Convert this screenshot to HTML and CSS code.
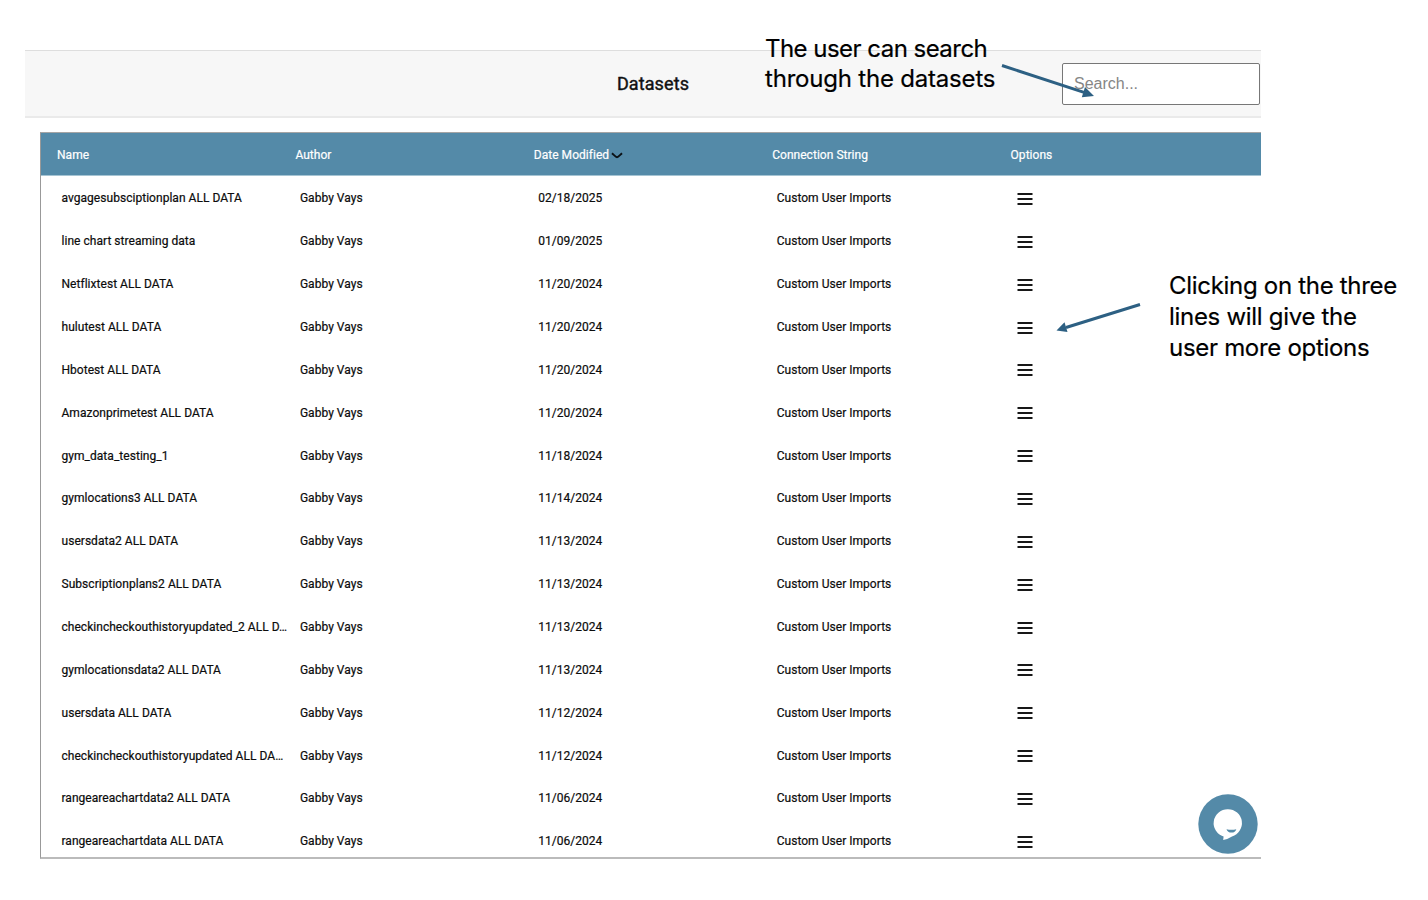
FILE: index.html
```html
<!DOCTYPE html>
<html lang="en">
<head>
<meta charset="utf-8">
<title>Datasets</title>
<link rel="stylesheet" href="styles.css">
</head>
<body>
<svg class="defs" aria-hidden="true"><symbol id="menu" viewBox="0 0 16 14"><path d="M.5 2h15M.5 7h15M.5 12h15" stroke="#181818" stroke-width="1.8" fill="none"/></symbol></svg>
<main class="page">
<header class="topbar">
<h1 class="title">Datasets</h1>
<input class="search" type="text" placeholder="Search..." aria-label="Search">
</header>
<section class="table">
<div class="row head"><span>Name</span><span>Author</span><span>Date Modified<svg class="chevron" viewBox="0 0 12 7"><path d="M1 1.200C3.500 3.500 4.800 5.200 6 5.200S8.500 3.500 11 1.200" fill="none" stroke="#0b1116" stroke-width="1.9"/></svg></span><span>Connection String</span><span>Options</span></div>
<div class="rows">
<div class="row"><span>avgagesubsciptionplan ALL DATA</span><span>Gabby Vays</span><span class="date">02/18/2025</span><span>Custom User Imports</span><svg class="menu"><use href="#menu"/></svg></div>
<div class="row"><span>line chart streaming data</span><span>Gabby Vays</span><span class="date">01/09/2025</span><span>Custom User Imports</span><svg class="menu"><use href="#menu"/></svg></div>
<div class="row"><span>Netflixtest ALL DATA</span><span>Gabby Vays</span><span class="date">11/20/2024</span><span>Custom User Imports</span><svg class="menu"><use href="#menu"/></svg></div>
<div class="row"><span>hulutest ALL DATA</span><span>Gabby Vays</span><span class="date">11/20/2024</span><span>Custom User Imports</span><svg class="menu"><use href="#menu"/></svg></div>
<div class="row"><span>Hbotest ALL DATA</span><span>Gabby Vays</span><span class="date">11/20/2024</span><span>Custom User Imports</span><svg class="menu"><use href="#menu"/></svg></div>
<div class="row"><span>Amazonprimetest ALL DATA</span><span>Gabby Vays</span><span class="date">11/20/2024</span><span>Custom User Imports</span><svg class="menu"><use href="#menu"/></svg></div>
<div class="row"><span>gym_data_testing_1</span><span>Gabby Vays</span><span class="date">11/18/2024</span><span>Custom User Imports</span><svg class="menu"><use href="#menu"/></svg></div>
<div class="row"><span>gymlocations3 ALL DATA</span><span>Gabby Vays</span><span class="date">11/14/2024</span><span>Custom User Imports</span><svg class="menu"><use href="#menu"/></svg></div>
<div class="row"><span>usersdata2 ALL DATA</span><span>Gabby Vays</span><span class="date">11/13/2024</span><span>Custom User Imports</span><svg class="menu"><use href="#menu"/></svg></div>
<div class="row"><span>Subscriptionplans2 ALL DATA</span><span>Gabby Vays</span><span class="date">11/13/2024</span><span>Custom User Imports</span><svg class="menu"><use href="#menu"/></svg></div>
<div class="row"><span>checkincheckouthistoryupdated_2 ALL D…</span><span>Gabby Vays</span><span class="date">11/13/2024</span><span>Custom User Imports</span><svg class="menu"><use href="#menu"/></svg></div>
<div class="row"><span>gymlocationsdata2 ALL DATA</span><span>Gabby Vays</span><span class="date">11/13/2024</span><span>Custom User Imports</span><svg class="menu"><use href="#menu"/></svg></div>
<div class="row"><span>usersdata ALL DATA</span><span>Gabby Vays</span><span class="date">11/12/2024</span><span>Custom User Imports</span><svg class="menu"><use href="#menu"/></svg></div>
<div class="row"><span>checkincheckouthistoryupdated ALL DA…</span><span>Gabby Vays</span><span class="date">11/12/2024</span><span>Custom User Imports</span><svg class="menu"><use href="#menu"/></svg></div>
<div class="row"><span>rangeareachartdata2 ALL DATA</span><span>Gabby Vays</span><span class="date">11/06/2024</span><span>Custom User Imports</span><svg class="menu"><use href="#menu"/></svg></div>
<div class="row"><span>rangeareachartdata ALL DATA</span><span>Gabby Vays</span><span class="date">11/06/2024</span><span>Custom User Imports</span><svg class="menu"><use href="#menu"/></svg></div>
</div>
</section>
</main>
<svg class="chat" viewBox="0 0 60 60"><circle cx="30" cy="30" r="29.7" fill="#548aa8"/><path d="M30 15.200a14 13.900 0 0 1 4 27.200Q29.500 45.200 25.200 46L25.600 42.400A14 13.900 0 0 1 30 15.200Z" fill="#fff"/><path d="M28.500 35.200q5 1 9.800 0-1 3.400-4.800 3.400t-5-3.400Z" fill="#548aa8"/></svg>
<p class="note note-search"><span class="tight">The user can search</span><br><span>through the datasets</span></p>
<p class="note note-menu"><span>Clicking on the three</span><br><span>lines will give the</span><br><span>user more options</span></p>
<svg class="arrows" viewBox="0 0 1428 900"><g stroke="#2d6083" stroke-width="3"><path d="M1002 65.500 1084 92.400M1140 304.500 1066 327.500"/></g><path d="M1094 96 1081.800 97.300 1085 87ZM1056.500 330.500 1064.500 322.200 1067.500 332Z" fill="#2d6083"/></svg>
</body>
</html>
```
FILE: styles.css
```css
* { box-sizing: border-box; }
body { margin: 0; height: 900px; position: relative; overflow: hidden; background: #fff; color: #0c0c0c; font-family: Roboto, sans-serif; }
.defs { position: absolute; width: 0; height: 0; }
.page { width: 1261px; padding: 50px 0 0 25px; }
.topbar { height: 68px; display: grid; grid-template-columns: 1fr auto 1fr; align-items: center; padding: 0 1px 0 21px; background: #f7f7f7; border-top: 1px solid #dedede; border-bottom: 2px solid #eaeaea; }
.title { grid-column: 2; margin: 0; font-size: 18px; font-weight: 400; -webkit-text-stroke: 0.4px #111; letter-spacing: 0.1px; line-height: 22px; color: #111; }
.search { justify-self: end; width: 198px; height: 42px; padding: 0 11px; border: 1px solid #777; border-radius: 2px; background: #fff; font: 16px "Liberation Sans", sans-serif; }
.search::placeholder { color: #868686; opacity: 1; }
.table { margin: 14px 0 0 15px; height: 727px; border: 1px solid #999; border-top-color: #a5a5a5; border-right: 0; border-bottom: 2px solid #bbb; overflow: hidden; }
.row { display: grid; grid-template-columns: repeat(5, 238.4px); height: 42.87px; align-items: center; padding-left: 20.5px; font-size: 12px; font-weight: 400; -webkit-text-stroke: 0.2px currentColor; letter-spacing: 0.035px; white-space: nowrap; }
.head { height: 43px; padding-left: 16px; background: #548aa8; border-bottom: 1px solid #a5c4d3; color: #fff; }
.head span { padding-top: 2px; }
.rows { padding-top: 1px; }
.date { letter-spacing: 0; }
.chevron { width: 12px; height: 7px; margin-left: 2px; -webkit-text-stroke: 0; }
.menu { width: 16px; height: 14px; margin-left: 1.5px; margin-top: 1px; }
.chat { position: absolute; left: 1198.3px; top: 794.3px; width: 60px; height: 60px; }
.note { position: absolute; margin: 0; color: #000; font: 24px/30px Inter, sans-serif; letter-spacing: -0.3px; -webkit-text-stroke: 0.2px #000; white-space: nowrap; }
.note .tight { letter-spacing: -0.53px; }
.note-search { left: 765px; top: 34px; letter-spacing: -0.2px; }
.note-menu { left: 1169px; top: 270px; line-height: 31px; }
.arrows { position: absolute; inset: 0; width: 1428px; height: 900px; pointer-events: none; }
```
